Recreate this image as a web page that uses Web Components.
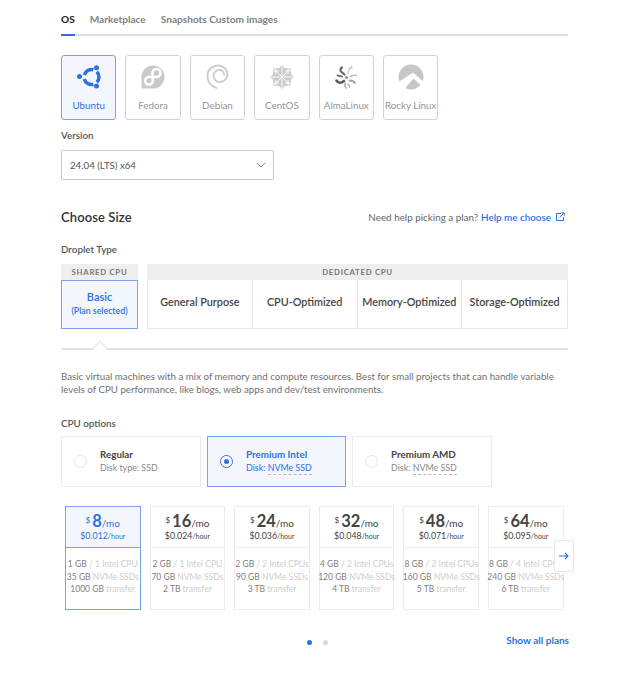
<!doctype html>
<html>
<head>
<meta charset="utf-8">
<style>
  html, body { margin: 0; background: #fff; }
  body { font-family: Lato, "Open Sans", sans-serif; color: #333; }
  size-page { display: block; width: 507px; margin-left: 61px; }
</style>
</head>
<body>
<size-page>
  <os-tabs></os-tabs>
  <div style="display:flex;gap:9px;margin-top:19px">
    <os-tile name="Ubuntu" icon="ubuntu" selected></os-tile>
    <os-tile name="Fedora" icon="fedora"></os-tile>
    <os-tile name="Debian" icon="debian"></os-tile>
    <os-tile name="CentOS" icon="centos"></os-tile>
    <os-tile name="AlmaLinux" icon="alma"></os-tile>
    <os-tile name="Rocky Linux" icon="rocky"></os-tile>
  </div>
  <field-label style="margin-top:9px">Version</field-label>
  <version-select style="margin-top:9px">24.04 (LTS) x64</version-select>
  <size-header></size-header>
  <field-label style="margin-top:18px">Droplet Type</field-label>
  <droplet-type></droplet-type>
  <plan-blurb>Basic virtual machines with a mix of memory and compute resources. Best for small projects that can handle variable levels of CPU performance, like blogs, web apps and dev/test environments.</plan-blurb>
  <field-label style="margin-top:21px">CPU options</field-label>
  <div style="display:flex;gap:6px;margin-top:7px">
    <cpu-option name="Regular" pre="Disk type: SSD"></cpu-option>
    <cpu-option name="Premium Intel" pre="Disk: " disk="NVMe SSD" selected></cpu-option>
    <cpu-option name="Premium AMD" pre="Disk: " disk="NVMe SSD"></cpu-option>
  </div>
  <plan-carousel>
    <plan-card price="8" hour="$0.012" a="1 GB" b="/ 1 Intel CPU" c="35 GB" d="NVMe SSDs" e="1000 GB" selected></plan-card>
    <plan-card price="16" hour="$0.024" a="2 GB" b="/ 1 Intel CPU" c="70 GB" d="NVMe SSDs" e="2 TB"></plan-card>
    <plan-card price="24" hour="$0.036" a="2 GB" b="/ 2 Intel CPUs" c="90 GB" d="NVMe SSDs" e="3 TB"></plan-card>
    <plan-card price="32" hour="$0.048" a="4 GB" b="/ 2 Intel CPUs" c="120 GB" d="NVMe SSDs" e="4 TB"></plan-card>
    <plan-card price="48" hour="$0.071" a="8 GB" b="/ 2 Intel CPUs" c="160 GB" d="NVMe SSDs" e="5 TB"></plan-card>
    <plan-card price="64" hour="$0.095" a="8 GB" b="/ 4 Intel CPUs" c="240 GB" d="NVMe SSDs" e="6 TB"></plan-card>
  </plan-carousel>
</size-page>

<script>
const BLUE = '#2f6fe4';

const OS_ICONS = {
  ubuntu: `<g fill="none" stroke="${BLUE}" stroke-width="3.4">
      <path d="M11.25 14.06A7.5 7.5 0 0 1 20.44 8.76M23.8 10.7A7.5 7.5 0 0 1 23.8 21.3M20.44 23.24A7.5 7.5 0 0 1 11.25 17.94"/></g>
    <g fill="${BLUE}"><circle cx="6.5" cy="15.5" r="2.5"/><circle cx="23.5" cy="6.8" r="2.5"/><circle cx="23.5" cy="25" r="2.5"/></g>`,
  fedora: `<path fill="#c9c9c9" d="M16 4.5a11.5 11.5 0 0 1 0 23H4.5V16A11.5 11.5 0 0 1 16 4.5z"/>
    <g fill="none" stroke="#fff" stroke-width="2.6"><path d="M15.5 16V12a4 4 0 1 1 4 4H12a3.8 3.8 0 1 0 3.8 3.8V16"/></g>`,
  debian: `<path fill="none" stroke="#cccccc" stroke-width="1.8" stroke-linecap="round" d="M15.5 27C9 25 6.5 20 6.5 14.5C6.5 8.5 11.5 4.5 17 4.5C22.5 4.5 26.5 8.5 26.5 13.5C26.5 18 23 21 18.5 21C15 21 12.5 18 12.5 14.5C12.5 11 15.5 9 18.5 9C21 9 23 11 23 13.5"/>`,
  centos: `<g fill="#cbcbcb"><path d="M16 3.5l3 4V13l-3 3-3-3V7.5z"/><path d="M16 28.5l3-4V19l-3-3-3 3v5.5z"/><path d="M3.5 16l4-3H13l3 3-3 3H7.5z"/><path d="M28.5 16l-4-3H19l-3 3 3 3h5.5z"/>
      <path d="M7 7h6v5l-1 1H7z"/><path d="M25 7h-6v5l1 1h5z"/><path d="M7 25h6v-5l-1-1H7z"/><path d="M25 25h-6v-5l1-1h5z"/></g>
    <g stroke="#fff" stroke-width=".9" fill="none"><path d="M16 3v26M3 16h26M7 7l18 18M25 7L7 25M10 5v8M22 5v8M10 19v8M22 19v8M5 10h8M19 10h8M5 22h8M19 22h8"/></g>`,
  alma: `<g fill="none" stroke-linecap="round">
      <path stroke="#666" stroke-width="2.2" d="M14.5 13.5L11.5 11C10 9.5 10 7.5 12 6.5"/>
      <path stroke="#777" stroke-width="2" d="M12 15.5L7.5 14.5"/>
      <path stroke="#5a5a5a" stroke-width="2.6" d="M6.5 19.5C8.5 22.5 11 22.5 14 20"/>
      <path stroke="#d0d0d0" stroke-width="1.4" d="M18 12.5C18 9.5 19 7.5 22 7M19 8l3-3"/>
      <path stroke="#bdbdbd" stroke-width="1.6" d="M20.5 15.5c2-1 4-1.5 6-1"/>
      <path stroke="#a0a0a0" stroke-width="1.8" d="M19.5 19.5c2 0 4 .5 5.5 2.5"/>
      <path stroke="#b0b0b0" stroke-width="1.6" d="M15.5 22c-1 1.5-1 3 .5 5M18 23c1 1 1.5 2 1.5 3"/></g>
    <circle cx="16.5" cy="16.5" r="1.6" fill="#999"/>`,
  rocky: `<circle cx="16" cy="16" r="12.5" fill="#c6c6c6"/><path fill="#fff" d="M2 22L18 11.5L30 22V25.5H27L18.5 17.5L11 26V32H2z"/>`
};

const osTabsTpl = document.createElement('template');
osTabsTpl.innerHTML = `
  <style>
    :host { display: flex; gap: 15px; height: 36px; box-sizing: border-box; border-bottom: 2px solid #dcdfe3; padding-top: 13px; position: relative; font-size: 10.1px; font-weight: 700; color: #808080; }
    :host::after { content: ""; position: absolute; left: 0; bottom: -2px; width: 14px; height: 2px; background: ${BLUE}; }
    .on { color: #222; }
    span { line-height: 12px; }
  </style>
  <span class="on">OS</span><span>Marketplace</span><span>Snapshots Custom images</span>`;
class OsTabs extends HTMLElement {
  constructor() {
    super();
    this.attachShadow({ mode: 'open' });
    this.shadowRoot.appendChild(osTabsTpl.content.cloneNode(true));
  }
}
customElements.define('os-tabs', OsTabs);

class OsTile extends HTMLElement {
  connectedCallback() {
    if (this.shadowRoot) return;
    this.attachShadow({ mode: 'open' });
    this.shadowRoot.innerHTML = `
      <style>
        :host { display: flex; flex-direction: column; align-items: center; box-sizing: border-box; width: 55.4px; height: 65px; border: 1px solid #d2d2d2; border-radius: 3px; color: #959595; font-size: 9.8px; padding-top: 5px; white-space: nowrap; }
        :host([selected]) { border-color: #7da2ea; background: #f3f7fd; color: ${BLUE}; }
        svg { display: block; width: 32px; height: 32px; flex: none; }
        span { margin-top: 6px; line-height: 12px; }
      </style>
      <svg viewBox="0 0 32 32">${OS_ICONS[this.getAttribute('icon')]}</svg>
      <span>${this.getAttribute('name')}</span>`;
  }
}
customElements.define('os-tile', OsTile);

const fieldLabelTpl = document.createElement('template');
fieldLabelTpl.innerHTML = `
  <style>:host { display: block; font-size: 9.8px; line-height: 12px; color: #555; font-weight: 600; }</style>
  <slot></slot>`;
class FieldLabel extends HTMLElement {
  constructor() {
    super();
    this.attachShadow({ mode: 'open' });
    this.shadowRoot.appendChild(fieldLabelTpl.content.cloneNode(true));
  }
}
customElements.define('field-label', FieldLabel);

const versionTpl = document.createElement('template');
versionTpl.innerHTML = `
  <style>
    :host { display: flex; align-items: center; justify-content: space-between; box-sizing: border-box; width: 213px; height: 30px; border: 1px solid #c8c8c8; border-radius: 2px; padding: 0 7px 0 8px; font-size: 9.7px; color: #555; }
    svg { width: 10px; height: 6px; }
  </style>
  <slot></slot>
  <svg viewBox="0 0 10 6"><path d="M1 1l4 4 4-4" fill="none" stroke="#888" stroke-width="1"/></svg>`;
class VersionSelect extends HTMLElement {
  constructor() {
    super();
    this.attachShadow({ mode: 'open' });
    this.shadowRoot.appendChild(versionTpl.content.cloneNode(true));
  }
}
customElements.define('version-select', VersionSelect);

const sizeHeaderTpl = document.createElement('template');
sizeHeaderTpl.innerHTML = `
  <style>
    :host { display: flex; align-items: center; justify-content: space-between; margin-top: 29px; height: 16px; padding-right: 3px; }
    h2 { margin: 0; font-size: 13px; font-weight: 600; color: #333; letter-spacing: .1px; }
    p { margin: 0; display: flex; align-items: center; gap: 3px; font-size: 9.85px; color: #666; }
    a { color: ${BLUE}; font-weight: 600; }
    svg { width: 10px; height: 10px; margin-left: 1px; }
  </style>
  <h2>Choose Size</h2>
  <p>Need help picking a plan? <a>Help me choose</a>
    <svg viewBox="0 0 10 10" fill="none" stroke="${BLUE}" stroke-width="1"><path d="M6 1.5H1.5v7h7V5M4.5 5.5L9 1M6.5 .8H9.2V3.5"/></svg>
  </p>`;
class SizeHeader extends HTMLElement {
  constructor() {
    super();
    this.attachShadow({ mode: 'open' });
    this.shadowRoot.appendChild(sizeHeaderTpl.content.cloneNode(true));
  }
}
customElements.define('size-header', SizeHeader);

const dropletTpl = document.createElement('template');
dropletTpl.innerHTML = `
  <style>
    :host { display: block; margin-top: 9px; }
    .types { display: flex; gap: 9px; }
    .head { height: 16px; background: #eeeeee; font-size: 7.8px; font-weight: 700; letter-spacing: .7px; color: #777; text-align: center; line-height: 16px; white-space: nowrap; }
    .shared { width: 77px; flex: none; }
    .basic { box-sizing: border-box; height: 49px; border: 1px solid #7da2ea; background: #f3f7fd; color: ${BLUE}; text-align: center; display: flex; flex-direction: column; justify-content: center; padding-bottom: 3px; }
    .basic b { font-size: 11px; font-weight: 600; line-height: 14px; }
    .basic small { font-size: 8.8px; line-height: 12px; font-weight: 600; margin-top: 1px; }
    .dedicated { flex: 1; min-width: 0; }
    .cells { display: grid; grid-template-columns: repeat(4, 1fr); height: 49px; box-sizing: border-box; border: 1px solid #e6e6e6; border-top: 0; }
    .cells span { display: flex; align-items: center; justify-content: center; padding-bottom: 6px; font-size: 10.8px; font-weight: 600; color: #444; border-right: 1px solid #e6e6e6; white-space: nowrap; }
    .cells span:last-child { border-right: 0; }
    .rule { position: relative; height: 2px; background: #e4e4e4; margin-top: 19px; }
    .rule::after { content: ""; position: absolute; left: 34px; top: -5px; width: 9px; height: 9px; background: #fff; border-left: 1px solid #e4e4e4; border-top: 1px solid #e4e4e4; transform: rotate(45deg); }
    .rule i { position: absolute; left: 28px; top: 2px; width: 22px; height: 6px; background: #fff; z-index: 1; }
  </style>
  <div class="types">
    <div class="shared">
      <div class="head">SHARED CPU</div>
      <div class="basic"><b>Basic</b><small>(Plan selected)</small></div>
    </div>
    <div class="dedicated">
      <div class="head">DEDICATED CPU</div>
      <div class="cells"><span>General Purpose</span><span>CPU-Optimized</span><span>Memory-Optimized</span><span>Storage-Optimized</span></div>
    </div>
  </div>
  <div class="rule"><i></i></div>`;
class DropletType extends HTMLElement {
  constructor() {
    super();
    this.attachShadow({ mode: 'open' });
    this.shadowRoot.appendChild(dropletTpl.content.cloneNode(true));
  }
}
customElements.define('droplet-type', DropletType);

const blurbTpl = document.createElement('template');
blurbTpl.innerHTML = `
  <style>:host { display: block; margin-top: 20px; font-size: 9.72px; line-height: 13px; color: #707070; }</style>
  <slot></slot>`;
class PlanBlurb extends HTMLElement {
  constructor() {
    super();
    this.attachShadow({ mode: 'open' });
    this.shadowRoot.appendChild(blurbTpl.content.cloneNode(true));
  }
}
customElements.define('plan-blurb', PlanBlurb);

class CpuOption extends HTMLElement {
  connectedCallback() {
    if (this.shadowRoot) return;
    this.attachShadow({ mode: 'open' });
    const disk = this.getAttribute('disk');
    this.shadowRoot.innerHTML = `
      <style>
        :host { display: flex; align-items: center; box-sizing: border-box; width: 140px; height: 51px; border: 1px solid #ececec; padding: 0 0 2px 12px; color: #444; }
        :host([selected]) { width: 139px; border-color: #7da2ea; background: #f3f7fd; color: ${BLUE}; }
        .radio { box-sizing: border-box; width: 13px; height: 13px; border: 1px solid #e6e6e6; border-radius: 50%; background: #fff; display: flex; align-items: center; justify-content: center; flex: none; margin: 2px 13px 0 0; }
        :host([selected]) .radio { border-color: ${BLUE}; }
        :host([selected]) .radio::after { content: ""; width: 5px; height: 5px; border-radius: 50%; background: ${BLUE}; }
        .t { font-size: 9.8px; font-weight: 700; line-height: 12px; }
        .s { font-size: 8.9px; line-height: 12px; margin-top: 2px; color: #888; white-space: nowrap; }
        :host([selected]) .s { color: ${BLUE}; }
        u { text-decoration: none; border-bottom: 1px dashed #bbb; padding-bottom: 1px; }
      </style>
      <span class="radio"></span>
      <div>
        <div class="t">${this.getAttribute('name')}</div>
        <div class="s">${this.getAttribute('pre')}${disk ? `<u>${disk}</u>` : ''}</div>
      </div>`;
  }
}
customElements.define('cpu-option', CpuOption);

const carouselTpl = document.createElement('template');
carouselTpl.innerHTML = `
  <style>
    :host { display: block; position: relative; margin-top: 19px; }
    .row { display: flex; gap: 9px; padding-left: 4px; }
    .next { position: absolute; left: 493px; top: 34px; box-sizing: border-box; width: 20px; height: 32px; background: #fff; border: 1px solid #e8e8e8; border-radius: 2px; display: flex; align-items: center; justify-content: center; z-index: 2; }
    .next svg { width: 10px; height: 8px; }
    .foot { display: flex; align-items: center; margin-top: 26px; height: 12px; padding-left: 246px; }
    .dot { width: 5px; height: 5px; border-radius: 50%; background: #2f6fe4; }
    .dot + .dot { background: #d9d9d9; margin-left: 11px; }
    a { margin: 0 -1px 4px auto; font-size: 10px; font-weight: 700; color: ${BLUE}; }
  </style>
  <div class="row"><slot></slot></div>
  <div class="next"><svg viewBox="0 0 10 8" fill="none" stroke="${BLUE}" stroke-width="1.2"><path d="M0 4h9M6 1l3 3-3 3"/></svg></div>
  <div class="foot"><span class="dot"></span><span class="dot"></span><a>Show all plans</a></div>`;
class PlanCarousel extends HTMLElement {
  constructor() {
    super();
    this.attachShadow({ mode: 'open' });
    this.shadowRoot.appendChild(carouselTpl.content.cloneNode(true));
  }
}
customElements.define('plan-carousel', PlanCarousel);

class PlanCard extends HTMLElement {
  connectedCallback() {
    if (this.shadowRoot) return;
    this.attachShadow({ mode: 'open' });
    const g = n => this.getAttribute(n);
    this.shadowRoot.innerHTML = `
      <style>
        :host { display: block; box-sizing: border-box; width: 75.6px; height: 104px; border: 1px solid #ececec; text-align: center; white-space: nowrap; color: #444; }
        :host([selected]) { border-color: #7da2ea; }
        .top { height: 41px; box-sizing: border-box; border-bottom: 1px solid #ececec; padding-top: 6px; }
        :host([selected]) .top { background: #f3f7fd; border-bottom-color: #7da2ea; color: ${BLUE}; }
        .price { font-size: 10px; line-height: 16px; height: 16px; }
        .price sup { font-size: 8px; vertical-align: 4px; line-height: 0; margin-right: 2px; }
        .price b { font-size: 16.5px; font-weight: 700; }
        .hour { font-size: 8.8px; line-height: 11px; margin-top: 1px; }
        .hour small { font-size: 7px; }
        .body { font-size: 8.5px; line-height: 12.5px; padding-top: 10px; color: #808080; display: flex; flex-direction: column; align-items: center; }
        .body i { font-style: normal; color: #cdcdcd; }
      </style>
      <div class="top">
        <div class="price"><sup>$</sup><b>${g('price')}</b>/mo</div>
        <div class="hour">${g('hour')}<small>/hour</small></div>
      </div>
      <div class="body">
        <span>${g('a')} <i>${g('b')}</i></span>
        <span>${g('c')} <i>${g('d')}</i></span>
        <span>${g('e')} <i>transfer</i></span>
      </div>`;
  }
}
customElements.define('plan-card', PlanCard);
</script>
</body>
</html>
